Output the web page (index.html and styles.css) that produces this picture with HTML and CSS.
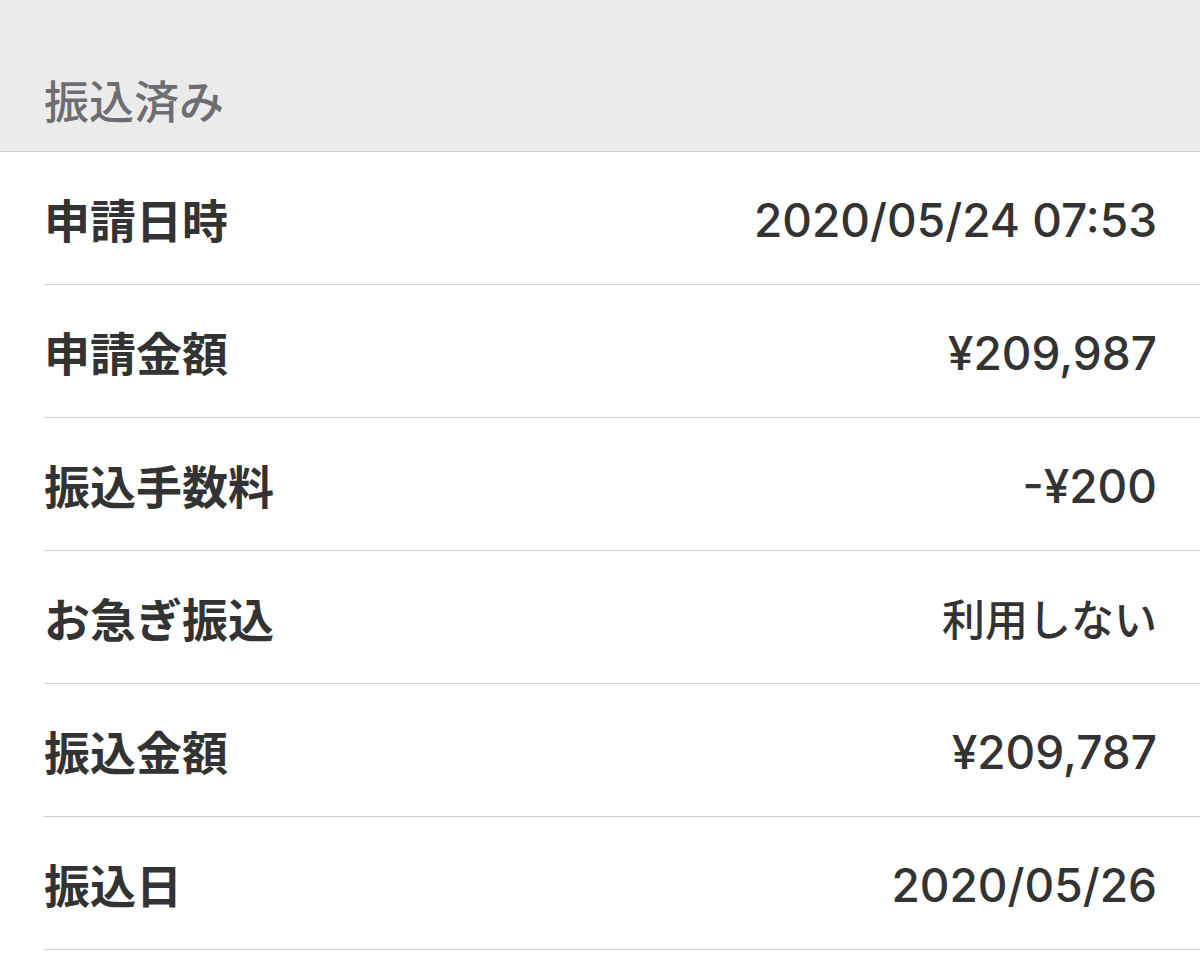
FILE: index.html
```html
<!DOCTYPE html>
<html lang="ja">
<head>
<meta charset="utf-8">
<link rel="stylesheet" href="styles.css">
</head>
<body>
<div class="header"><span class="header-title">振込済み</span></div>
<div class="list">
  <div class="row"><span class="label">申請日時</span><span class="value">2020/05/24 07:53</span></div>
  <div class="row"><span class="label">申請金額</span><span class="value">¥209,987</span></div>
  <div class="row"><span class="label">振込手数料</span><span class="value">-¥200</span></div>
  <div class="row"><span class="label">お急ぎ振込</span><span class="value value-text">利用しない</span></div>
  <div class="row"><span class="label">振込金額</span><span class="value">¥209,787</span></div>
  <div class="row"><span class="label">振込日</span><span class="value">2020/05/26</span></div>
</div>
</body>
</html>
```
FILE: styles.css
```css
html, body {
  margin: 0;
  padding: 0;
  background: #ffffff;
}
body {
  font-family: "Noto Sans CJK JP", "Noto Sans", sans-serif;
  color: #333333;
}
.header {
  height: 151px;
  background: #ebebeb;
  border-bottom: 1px solid #cfcfcf;
  display: flex;
  align-items: center;
  padding-left: 44px;
}
.header-title {
  font-size: 45px;
  font-weight: 500;
  color: #6d6d72;
  padding-top: 48px;
  line-height: 1;
}
.list {
  padding-left: 44px;
}
.row {
  height: 132px;
  border-bottom: 1px solid #cfcfcf;
  display: flex;
  align-items: center;
  justify-content: space-between;
  padding-right: 43px;
}
.label {
  font-size: 46px;
  font-weight: 700;
  line-height: 1;
  color: #333333;
}
.value {
  font-family: Inter, "Noto Sans CJK JP", sans-serif;
  font-size: 46px;
  font-weight: 500;
  line-height: 1;
  color: #333333;
  padding-top: 4px;
}
.value-text {
  font-family: "Noto Sans CJK JP", sans-serif;
  font-size: 43px;
  padding-top: 0;
}
```
